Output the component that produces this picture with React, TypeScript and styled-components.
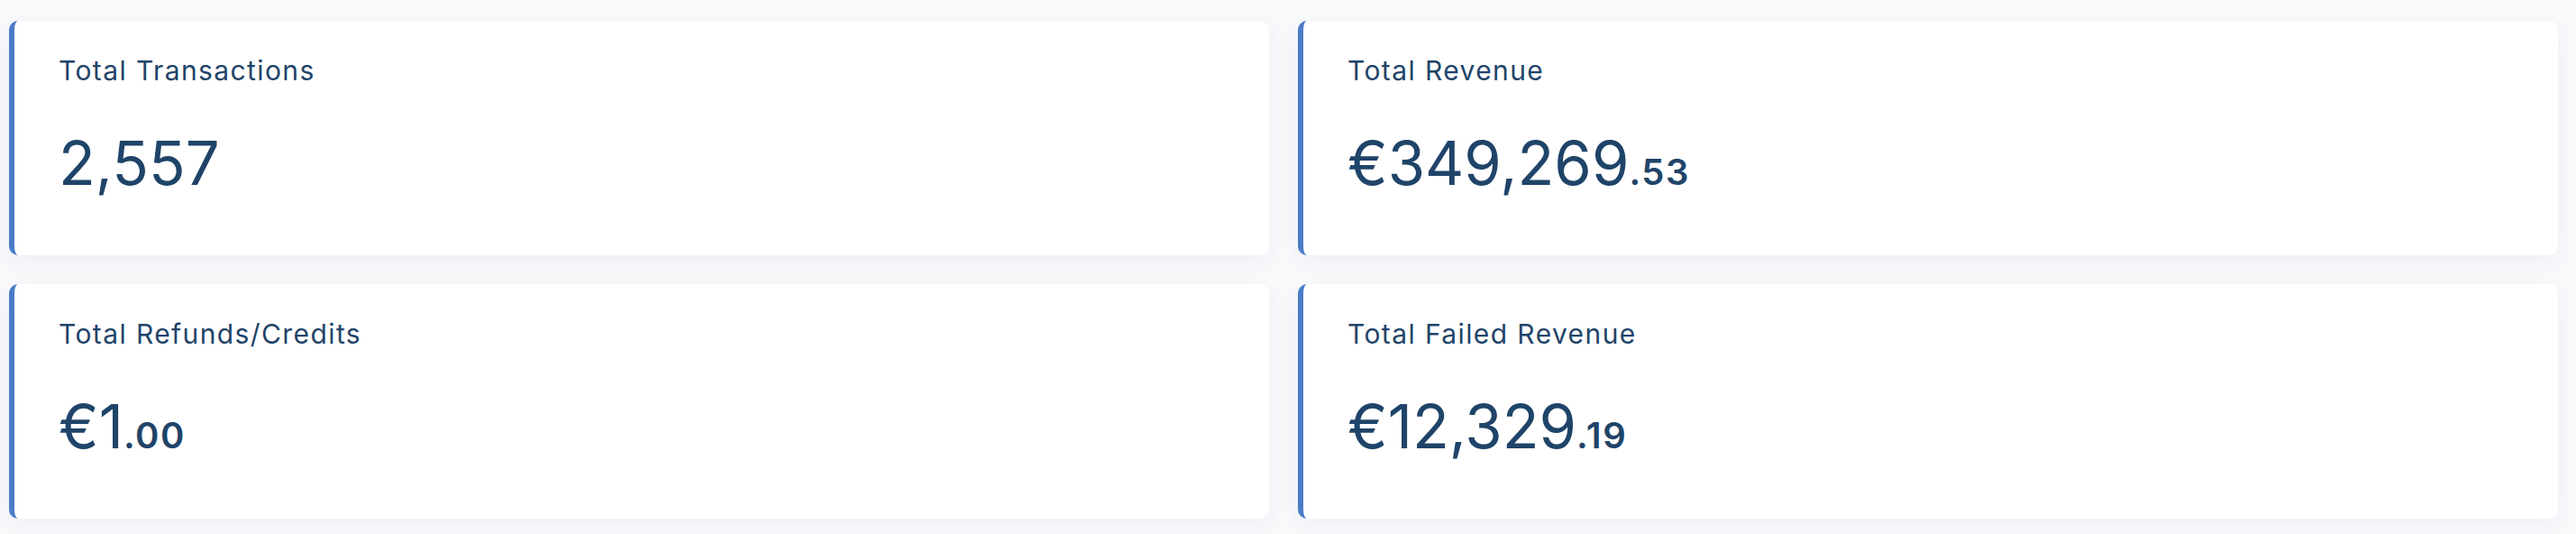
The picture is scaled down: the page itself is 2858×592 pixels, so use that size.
import styled, { createGlobalStyle } from "styled-components";

interface StatProps {
  title: string;
  whole: string;
  cents?: string;
}

const GlobalStyle = createGlobalStyle`
  body {
    margin: 0;
    background: #f8f9fb;
    font-family: "Inter", "Noto Sans", sans-serif;
  }
`;

const Page = styled.div`
  padding: 23px 20px 17px 10px;
`;

const StatsGrid = styled.div`
  display: grid;
  grid-template-columns: 1fr 1fr;
  gap: 32px;
`;

const Card = styled.div`
  height: 260px;
  box-sizing: border-box;
  background: #fff;
  border-left: 6px solid #4a7cc8;
  border-radius: 10px;
  padding: 33px 40px 0 49px;
  box-shadow: 0 6px 24px rgba(30, 50, 110, 0.05);
  display: flex;
  flex-direction: column;
`;

const CardTitle = styled.div`
  color: #1f4469;
  font-size: 30px;
  line-height: 45px;
  letter-spacing: 1.4px;
`;

const CardValue = styled.div`
  margin-top: 46px;
  color: #1f4469;
  font-size: 67px;
  line-height: 1;
  font-weight: 400;
`;

const Cents = styled.span`
  font-size: 40px;
  font-weight: 600;
  letter-spacing: 1.5px;
`;

const StatCard: React.FC<StatProps> = ({ title, whole, cents }) => {
  return (
    <Card>
      <CardTitle>{title}</CardTitle>
      <CardValue>
        {whole}
        {cents && <Cents>{cents}</Cents>}
      </CardValue>
    </Card>
  );
};

const stats: StatProps[] = [
  { title: "Total Transactions", whole: "2,557" },
  { title: "Total Revenue", whole: "€349,269", cents: ".53" },
  { title: "Total Refunds/Credits", whole: "€1", cents: ".00" },
  { title: "Total Failed Revenue", whole: "€12,329", cents: ".19" },
];

const App = () => {
  return (
    <>
      <GlobalStyle />
      <Page>
        <StatsGrid>
          {stats.map((s) => (
            <StatCard key={s.title} {...s} />
          ))}
        </StatsGrid>
      </Page>
    </>
  );
};

export default App;
